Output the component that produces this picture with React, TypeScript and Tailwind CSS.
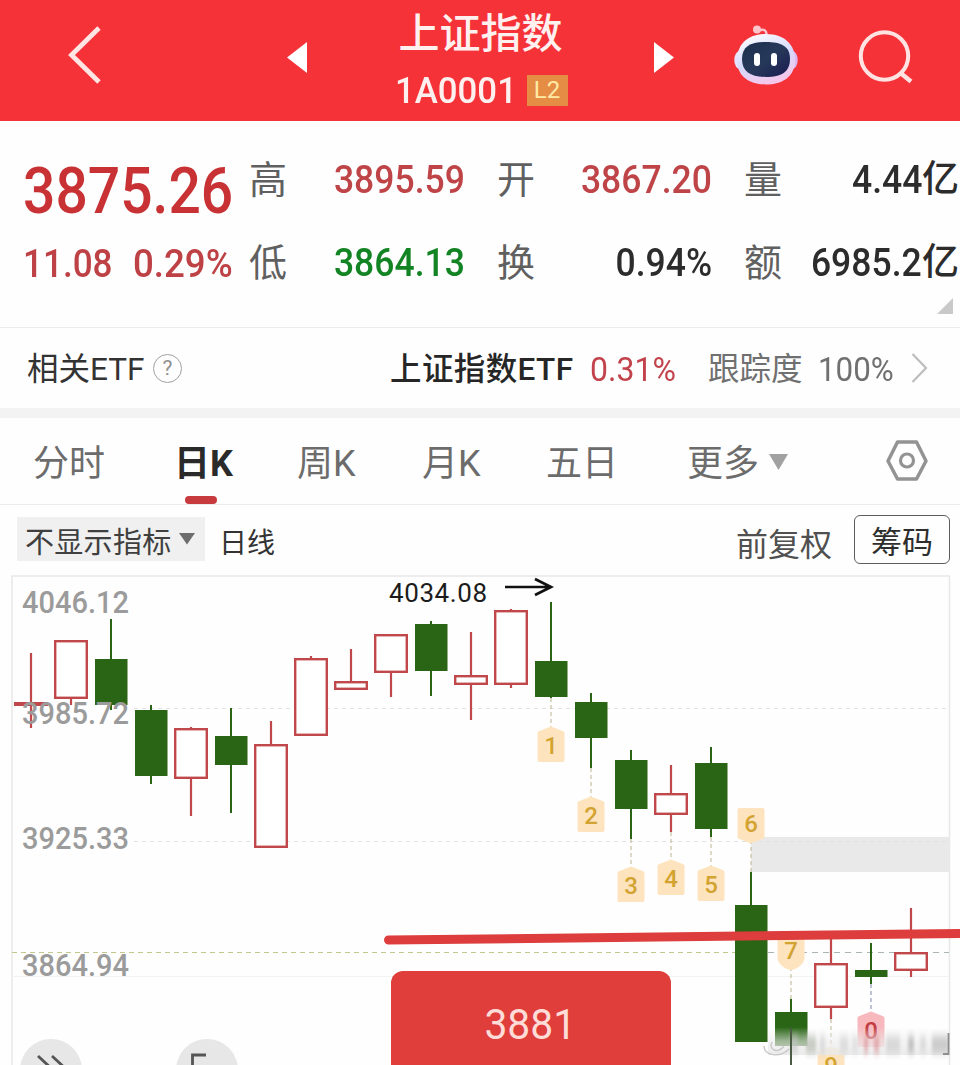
import React from "react";

type Candle = { up: boolean; top: number; bottom: number; high: number; low: number };

const candles: Candle[] = [
  { up: true, top: 702, bottom: 706, high: 653, low: 728 },
  { up: true, top: 640, bottom: 699, high: 640, low: 705 },
  { up: false, top: 659, bottom: 705, high: 619, low: 710 },
  { up: false, top: 710, bottom: 776, high: 705, low: 784 },
  { up: true, top: 728, bottom: 779, high: 727, low: 816 },
  { up: false, top: 736, bottom: 765, high: 708, low: 813 },
  { up: true, top: 744, bottom: 848, high: 721, low: 848 },
  { up: true, top: 658, bottom: 736, high: 656, low: 736 },
  { up: true, top: 681, bottom: 690, high: 649, low: 690 },
  { up: true, top: 634, bottom: 673, high: 634, low: 697 },
  { up: false, top: 624, bottom: 671, high: 621, low: 696 },
  { up: true, top: 675, bottom: 685, high: 632, low: 720 },
  { up: true, top: 610, bottom: 685, high: 609, low: 688 },
  { up: false, top: 661, bottom: 697, high: 602, low: 698 },
  { up: false, top: 702, bottom: 738, high: 693, low: 768 },
  { up: false, top: 760, bottom: 809, high: 750, low: 839 },
  { up: true, top: 793, bottom: 815, high: 765, low: 832 },
  { up: false, top: 763, bottom: 829, high: 747, low: 837 },
  { up: false, top: 905, bottom: 1042, high: 872, low: 1042 },
  { up: false, top: 1012, bottom: 1046, high: 999, low: 1066 },
  { up: true, top: 963, bottom: 1008, high: 936, low: 1019 },
  { up: false, top: 970, bottom: 977, high: 943, low: 984 },
  { up: true, top: 952, bottom: 971, high: 908, low: 977 },
];

type Marker = { n: string; x: number; y: number; from: number; down?: boolean; pink?: boolean };

const markers: Marker[] = [
  { n: "1", x: 551, y: 727, from: 698 },
  { n: "2", x: 591, y: 797, from: 768 },
  { n: "3", x: 631, y: 867, from: 839 },
  { n: "4", x: 671, y: 860, from: 832 },
  { n: "5", x: 711, y: 866, from: 837 },
  { n: "6", x: 751, y: 808, from: 872, down: true },
  { n: "7", x: 791, y: 935, from: 999, down: true },
  { n: "9", x: 831, y: 1047, from: 1019 },
  { n: "0", x: 871, y: 1012, from: 984, pink: true },
];

const levels = [
  { label: "4046.12", y: 613 },
  { label: "3985.72", y: 724 },
  { label: "3925.33", y: 849 },
  { label: "3864.94", y: 976 },
];

function Robot() {
  return (
    <svg width="64" height="62" viewBox="0 0 64 62">
      <defs>
        <linearGradient id="shell" x1="0.1" y1="0" x2=".5" y2="1">
          <stop offset="0" stopColor="#fff" />
          <stop offset=".55" stopColor="#d6dafc" />
          <stop offset="1" stopColor="#f5c6ea" />
        </linearGradient>
        <linearGradient id="face" x1="0" y1="0" x2="1" y2="1">
          <stop offset="0" stopColor="#1b2f4c" />
          <stop offset=".5" stopColor="#27395a" />
          <stop offset="1" stopColor="#1a1a50" />
        </linearGradient>
      </defs>
      <path d="M24 7 Q33 3 32.500 12" fill="none" stroke="#fbc3cb" strokeWidth="2.500" />
      <circle cx="23" cy="5.500" r="4" fill="#ffc4cc" />
      <ellipse cx="5.500" cy="36" rx="5.200" ry="9" fill="#e8e3ff" />
      <ellipse cx="58.500" cy="36" rx="5.200" ry="9" fill="#dcb9f2" />
      <path d="M32 10 C51 10 61 21 61 36 C61 53 48 60.500 32 60.500 C16 60.500 3 53 3 36 C3 21 13 10 32 10Z" fill="url(#shell)" />
      <path d="M32 18 C47 18 56 22 56 35 C56 48 47 53 32 53 C17 53 8 48 8 35 C8 22 17 18 32 18Z" fill="url(#face)" />
      <rect x="20" y="29" width="6" height="13" rx="3" fill="#fff" />
      <rect x="37" y="29" width="6" height="13" rx="3" fill="#fff" />
    </svg>
  );
}

function Header() {
  return (
    <header className="flex h-[121px] items-start bg-[#f53238] text-[#fff0f0]">
      <svg className="mt-[26px] ml-[67px]" width="34" height="58" viewBox="0 0 34 58">
        <path d="M32 2 L4.500 29 L32 56" fill="none" stroke="#ffe6e4" strokeWidth="4.800" />
      </svg>
      <svg className="mt-[41px] ml-[186px]" width="20" height="33" viewBox="0 0 20 33">
        <path d="M0 16.500 L20 1 V32Z" fill="#fff" />
      </svg>
      <div className="flex w-[347px] flex-col items-center">
        <h1 className="mt-[11px] text-[41px] leading-[46px] font-medium whitespace-nowrap">上证指数</h1>
        <div className="mt-[14px] flex h-[38px] w-[174px] items-center">
          <div className="w-[133px] pt-px pl-px">
            <span className="inline-block origin-left scale-x-[0.94] text-[37px] leading-[38px] font-medium">1A0001</span>
          </div>
          <span className="flex h-[31px] w-[41px] items-center justify-center bg-[#e68d45] text-[24px] leading-none text-[#ffeaa5]">
            L2
          </span>
        </div>
      </div>
      <svg className="mt-[41px]" width="20" height="33" viewBox="0 0 20 33">
        <path d="M20 16.500 L0 1 V32Z" fill="#fff" />
      </svg>
      <div className="mt-[24px] ml-[60px]">
        <Robot />
      </div>
      <svg className="mt-[30px] ml-[60px]" width="56" height="56" viewBox="0 0 56 56">
        <circle cx="26.500" cy="26" r="23.700" fill="none" stroke="#ffe2e2" strokeWidth="4" />
        <path d="M42.500 43 L53 51.500" stroke="#ffe2e2" strokeWidth="4.500" />
      </svg>
    </header>
  );
}

function Stat({ label, value, tone, unit }: { label: string; value: string; tone: string; unit?: string }) {
  return (
    <div className="flex h-[50px] items-center justify-between">
      <span className="text-[38px] leading-[50px] text-[#606060]">{label}</span>
      <span className={`flex items-center justify-end text-[39px] leading-[50px] font-medium ${tone}`}>
        <span className="inline-block origin-right scale-x-[0.91]">{value}</span>
        {unit && <span className="text-[37px]">{unit}</span>}
      </span>
    </div>
  );
}

function Quote() {
  return (
    <section className="flex h-[207px] border-b border-[#ececec]">
      <div className="w-[249px] shrink-0 pl-[23px]">
        <div className="mt-[34px] h-[72px]">
          <span className="inline-block origin-left scale-x-[0.877] text-[65px] leading-[72px] font-medium text-[#c93235]">3875.26</span>
        </div>
        <div className="mt-[12px] flex h-[50px] text-[39px] leading-[50px] font-medium text-[#bd4145]">
          <div className="w-[110px]">
            <span className="inline-block origin-left scale-x-[0.9]">11.08</span>
          </div>
          <span className="inline-block origin-left scale-x-[0.94]">0.29%</span>
        </div>
      </div>
      <div className="w-[711px]">
        <div className="mt-[34px] grid grid-cols-[216px_215px_215px] gap-x-8 gap-y-[33px]">
          <Stat label="高" value="3895.59" tone="text-[#bf4448]" />
          <Stat label="开" value="3867.20" tone="text-[#bf4448]" />
          <Stat label="量" value="4.44" unit="亿" tone="text-[#2c2c2c]" />
          <Stat label="低" value="3864.13" tone="text-[#138424]" />
          <Stat label="换" value="0.94%" tone="text-[#2c2c2c]" />
          <Stat label="额" value="6985.2" unit="亿" tone="text-[#2c2c2c]" />
        </div>
        <svg className="mt-[10px] ml-[688px]" width="16" height="16" viewBox="0 0 16 16">
          <path d="M16 0 V16 H0Z" fill="#c9c9c9" />
        </svg>
      </div>
    </section>
  );
}

function EtfRow() {
  return (
    <section className="flex h-20 items-center pl-[27px] text-[31.500px] leading-[44px] whitespace-nowrap">
      <span className="w-[126px] pt-1 text-[#333]">相关ETF</span>
      <span className="flex size-[29px] items-center justify-center rounded-full border-[1.500px] border-[#a0a0a0] text-[21px] leading-none text-[#909090]">?</span>
      <span className="ml-[208px] w-[200px] pt-1 font-medium tracking-[0.400px] text-[#262626]">上证指数ETF</span>
      <span className="w-[118px] pt-1 text-[#c3434d]">
        <span className="inline-block origin-left scale-x-[0.97] text-[33px]">0.31%</span>
      </span>
      <span className="w-[110px] pt-1 text-[#707070]">跟踪度</span>
      <span className="w-[93px] pt-1 text-[#707070]">
        <span className="inline-block origin-left scale-x-[0.95] text-[33px]">100%</span>
      </span>
      <svg width="17" height="32" viewBox="0 0 17 32">
        <path d="M1.500 2 L15 16 L1.500 30" fill="none" stroke="#bdbdbd" strokeWidth="2.200" />
      </svg>
    </section>
  );
}

function Tabs() {
  return (
    <nav className="flex h-[87px] items-start border-b border-[#ebebeb] pl-[33px] text-[36px] leading-[50px] whitespace-nowrap text-[#6c6c6c]">
      <span className="mt-[21px] w-[141px]">分时</span>
      <div className="mt-[21px] w-[123px]">
        <div className="font-bold text-[#2a2a2a]">日K</div>
        <div className="mt-[7px] ml-[11px] h-2 w-8 rounded-full bg-[#c73a3d]" />
      </div>
      <span className="mt-[21px] w-[125px]">周K</span>
      <span className="mt-[21px] w-[124px]">月K</span>
      <span className="mt-[21px] w-[141px]">五日</span>
      <span className="mt-[21px] w-[82px]">更多</span>
      <svg className="mt-[36px]" width="19" height="17" viewBox="0 0 19 17">
        <path d="M0 0 H19 L9.500 16Z" fill="#a1a1a1" />
      </svg>
      <svg className="mt-[22px] ml-[98px]" width="42" height="42" viewBox="0 0 42 42">
        <path d="M11.500 2 H30.500 L40 21 L30.500 39 H11.500 L2 21Z" fill="none" stroke="#939393" strokeWidth="3.500" strokeLinejoin="round" />
        <circle cx="21" cy="20.500" r="6.500" fill="none" stroke="#939393" strokeWidth="3.200" />
      </svg>
    </nav>
  );
}

function Toolbar() {
  return (
    <section className="flex h-[70px] items-start pl-[17px] whitespace-nowrap">
      <div className="mt-3 flex h-[44px] w-[188px] items-center bg-[#f0f0f0] pl-2 text-[29px] text-[#3f3f3f]">
        <span className="w-[154px] pt-2 leading-10 tracking-[0.300px]">不显示指标</span>
        <svg width="16" height="12" viewBox="0 0 16 12">
          <path d="M0 0 H16 L8 11.500Z" fill="#6d6d6d" />
        </svg>
      </div>
      <span className="mt-[19px] ml-[14px] w-[517px] text-[28px] leading-10 text-[#333]">日线</span>
      <span className="mt-[18px] w-[118px] text-[32px] leading-[44px] text-[#505050]">前复权</span>
      <span className="mt-[10px] flex h-[49px] w-[96px] items-center justify-center rounded-md border-[1.500px] border-[#5c5c5c] pt-[5px] text-[31px] leading-none text-[#2e2e2e]">
        筹码
      </span>
    </section>
  );
}

function MarkerBadge({ n, x, y, from, down, pink }: Marker) {
  const fill = pink ? "#f7b9bd" : "#fde4bf";
  const outline = n === "7" ? "M0 2 Q9 4 11.500 11 V33 H-11.500 V11 Q-9 4 0 2Z" : "M0 1.500 L11.500 6 V33 H-11.500 V6Z";
  return (
    <g>
      <path d={`M${x} ${from} V${down ? y + 33 : y + 1}`} stroke={pink ? "#7e82aa" : "#b9b58f"} strokeWidth="1" strokeDasharray="4 3" />
      <g transform={`translate(${x} ${y})${down ? " translate(0 35) scale(1 -1)" : ""}`}>
        <path d={outline} fill={fill} stroke={fill} strokeWidth="4" strokeLinejoin="round" />
      </g>
      <text x={x} y={y + (down ? 24 : 27)} textAnchor="middle" fontSize="24" fontWeight="500" fill={pink ? "#c23b41" : "#d3a331"}>
        {n}
      </text>
    </g>
  );
}

function CandleShape({ c, i }: { c: Candle; i: number }) {
  const x = 31 + i * 40;
  if (!c.up) {
    return (
      <g fill="#296515">
        <rect x={x - 1} y={c.high} width="2" height={c.low - c.high} />
        <rect x={x - 16} y={c.top} width="32.500" height={c.bottom - c.top} />
      </g>
    );
  }
  return (
    <g>
      <path d={`M${x} ${c.high} V${c.top} M${x} ${c.bottom} V${c.low}`} stroke="#c0474a" strokeWidth="2.200" />
      {c.bottom - c.top < 6 ? (
        <rect x={x - 17} y={c.top} width="34" height="4" fill="#c0474a" />
      ) : (
        <rect x={x - 15.8} y={c.top + 1.2} width="31.600" height={c.bottom - c.top - 2.4} fill="#fff" stroke="#c0474a" strokeWidth="2.400" />
      )}
    </g>
  );
}

const smears = [
  { x: 790, w: 8, c: "#c4c4c4" },
  { x: 806, w: 10, c: "#b0b8ac" },
  { x: 820, w: 5, c: "#cfcfcf" },
  { x: 840, w: 8, c: "#d2d2d2" },
  { x: 852, w: 6, c: "#dadada" },
  { x: 864, w: 4, c: "#d98f93" },
  { x: 874, w: 5, c: "#d98f93" },
  { x: 886, w: 14, c: "#cbcbcb" },
  { x: 908, w: 6, c: "#a9a9a9" },
  { x: 920, w: 6, c: "#d2d2d2" },
  { x: 932, w: 16, c: "#b6b6b6" },
];

function Chart() {
  return (
    <section className="relative h-[490px] overflow-hidden">
      <svg className="block" width="960" height="490" viewBox="0 575 960 490" fontFamily="Roboto, 'Liberation Sans', sans-serif">
        <defs>
          <linearGradient id="fade" x1="0" y1="0" x2="0" y2="1">
            <stop offset="0" stopColor="#f0f0f0" stopOpacity="0" />
            <stop offset=".5" stopColor="#ececec" stopOpacity=".6" />
            <stop offset="1" stopColor="#e9e9e9" stopOpacity=".9" />
          </linearGradient>
          <filter id="soft" x="-20%" y="-40%" width="140%" height="180%">
            <feGaussianBlur stdDeviation="1.500 4" />
          </filter>
        </defs>
        <path d="M12 1065 V576 H949.500 V1065" fill="none" stroke="#e8e8e8" strokeWidth="1.500" />
        <rect x="751" y="837" width="198" height="35" fill="#eae9ea" />
        <path d="M134 708.500 H949 M134 841.500 H949" stroke="#e2e2e2" strokeWidth="1" strokeDasharray="4 4" />
        <path d="M12 976.500 H949" stroke="#f3f3f3" strokeWidth="1" />
        <path d="M12 952.500 H735" stroke="#c3c789" strokeWidth="1.200" strokeDasharray="5 4" />
        <path d="M735 952.500 H949" stroke="#a9b5b2" strokeWidth="1.200" strokeDasharray="6 5" />
        {markers.map((m) => (
          <MarkerBadge key={m.n} {...m} />
        ))}
        {candles.map((c, i) => (
          <CandleShape key={i} c={c} i={i} />
        ))}
        {levels.map((l) => (
          <text key={l.label} x="22" y={l.y} fontSize="31" fontWeight="500" fill="#9b9b9b" textLength="107" lengthAdjust="spacingAndGlyphs">
            {l.label}
          </text>
        ))}
        <text x="389" y="602" fontSize="26" fill="#1c1c1c" textLength="98" lengthAdjust="spacing">
          4034.08
        </text>
        <path d="M505 587 H551 M535 579 L551 587 L535 595" fill="none" stroke="#111" strokeWidth="2.700" />
        <path d="M388.500 940 L965 933.500" stroke="#dd3d3c" strokeWidth="9" strokeLinecap="round" />
        <rect x="768" y="1027" width="180" height="28" fill="url(#fade)" />
        <g filter="url(#soft)" opacity=".65">
          {smears.map((s) => (
            <rect key={s.x} x={s.x} y="1036" width={s.w} height="17" fill={s.c} />
          ))}
        </g>
        <path d="M764 1046 C764 1056 780 1058 789 1049 M772 1042 C768 1050 778 1054 784 1046" fill="none" stroke="#cacaca" strokeWidth="1.500" />
        <path d="M948.500 1033 V1054 H943" fill="none" stroke="#8d8d8d" strokeWidth="1.800" />
        <path d="M791 1028 V1066" stroke="#4b5a42" strokeWidth="2" />
        <circle cx="51" cy="1070" r="31" fill="#e7e7e7" />
        <path d="M38 1056 L52 1069 L38 1082 M52 1056 L66 1069 L52 1082" fill="none" stroke="#555" strokeWidth="2.800" />
        <circle cx="207" cy="1070" r="31" fill="#e7e7e7" />
        <path d="M206 1055 H192.500 V1070" fill="none" stroke="#555" strokeWidth="2.800" />
      </svg>
      <div className="absolute top-[396px] left-[391px] flex h-[110px] w-[280px] justify-center rounded-t-xl bg-[#df3e3b] pt-[23px] text-[43px] leading-[60px] text-[#ffdcd7]">
        <span className="inline-block -translate-x-px scale-x-[0.95]">3881</span>
      </div>
    </section>
  );
}

export default function App() {
  return (
    <main className="h-[1065px] w-[960px] overflow-hidden bg-[#fefefe] font-[Roboto,'Noto_Sans_CJK_SC',sans-serif]">
      <Header />
      <Quote />
      <EtfRow />
      <div className="h-[10px] bg-[#f3f3f3]" />
      <Tabs />
      <Toolbar />
      <Chart />
    </main>
  );
}
